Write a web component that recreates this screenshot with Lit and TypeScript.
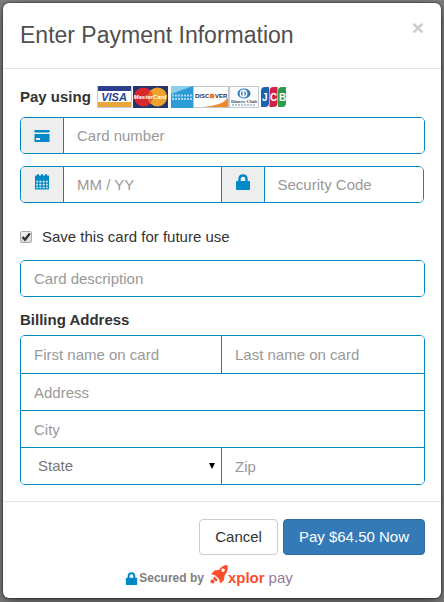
import { LitElement, html, css, svg } from "lit";
import { customElement, state } from "lit/decorators.js";

const lock = svg`<path d="M2 7h12q1 0 1 1v7q0 1-1 1H2q-1 0-1-1V8q0-1 1-1z"/><path d="M4.500 8V5q0-3.500 3.500-3.500T11.500 5v3" fill="none" stroke="currentColor" stroke-width="2.400"/>`;

@customElement("card-brands")
class CardBrands extends LitElement {
  static styles = css`
    :host { display: block; }
    svg { display: block; }
    text { font-family: "Liberation Sans", Arial, sans-serif; font-weight: bold; }
    .serif { font-family: "Liberation Serif", "Times New Roman", serif; }
  `;

  render() {
    return html`
      <svg width="190" height="22" viewBox="0 0 190 22" role="img" aria-label="Accepted cards">
        <rect x=".5" y=".5" width="34" height="21" fill="#fff" stroke="#c8ccd8"/>
        <rect x="1" y="0" width="33" height="5" fill="#2b3f8f"/>
        <rect x="1" y="16" width="33" height="5" fill="#eba63a"/>
        <text x="17" y="15" text-anchor="middle" font-size="11" font-style="italic" fill="#2b3f8f">VISA</text>

        <rect x="36" y="0" width="35" height="22" fill="#23366f"/>
        <circle cx="46.500" cy="11" r="9.500" fill="#d8282c"/>
        <circle cx="60.500" cy="11" r="9.500" fill="#f0a32c"/>
        <path d="M53.500 4.600a9.500 9.500 0 0 1 0 12.800a9.500 9.500 0 0 1 0-12.800z" fill="#e2662c"/>
        <text x="53" y="13" text-anchor="middle" font-size="6" font-style="italic" fill="#fff">MasterCard</text>

        <rect x="74" y="0" width="22" height="22" fill="#2f9bd6"/>
        <path d="M74 0h22L74 8z" fill="#a6daf2" opacity=".8"/>
        <path d="M75 9.500h20M75 13h20" stroke="#a9daf1" stroke-width="2" stroke-dasharray="2 1"/>

        <rect x="96.500" y=".5" width="35" height="21" fill="#fff" stroke="#c4c4c4"/>
        <path d="M131 12v9h-25q18-1 25-9z" fill="#f18a2b"/>
        <text x="98" y="12" font-size="6" fill="#3a3032">DISC</text>
        <circle cx="115" cy="10" r="2.500" fill="#f07f26"/>
        <text x="118" y="12" font-size="6" fill="#3a3032">VER</text>

        <rect x="132.500" y=".5" width="29" height="21" fill="#fafcfe" stroke="#c3cbd1"/>
        <ellipse cx="147" cy="7.500" rx="6.500" ry="5" fill="#2e7ab8"/>
        <circle cx="146.500" cy="7.500" r="3.900" fill="#fff"/>
        <path d="M145.500 4.500q-3 3 0 6zM147.500 4.500q3 3 0 6z" fill="#2e7ab8"/>
        <text class="serif" x="147" y="17" text-anchor="middle" font-size="5" fill="#3c4a5a">Diners Club</text>
        <path d="M135 19h24" stroke="#7d8894" stroke-dasharray="2 1"/>

        <path d="M164 21V5q0-4 4-4h4v16q0 4-4 4z" fill="#1c62ac"/>
        <path d="M172.500 21V5q0-4 4-4h4v16q0 4-4 4z" fill="#d3204a"/>
        <path d="M181 21V5q0-4 4-4h4v16q0 4-4 4z" fill="#2c9a48"/>
        <text x="165" y="15" font-size="10" fill="#fff">J</text>
        <text x="173" y="15" font-size="10" fill="#fff">C</text>
        <text x="182" y="15" font-size="10" fill="#fff">B</text>
      </svg>
    `;
  }
}

@customElement("app-root")
class AppRoot extends LitElement {
  @state() private saveCard = true;

  static styles = css`
    :host {
      display: block;
      box-sizing: border-box;
      min-height: 100vh;
      padding: 3px;
      background: #808080;
      font-family: "Liberation Sans", Arial, sans-serif;
      font-size: 15px;
      line-height: 20px;
      color: #333;
      --line: #0089c6;
    }
    * { box-sizing: border-box; }
    input, select, button { font: inherit; color: inherit; margin: 0; }
    .modal {
      background: #fff;
      border-radius: 6px;
      box-shadow: 0 0 1px 1px rgba(0, 0, 0, 0.3), 0 5px 15px rgba(0, 0, 0, 0.5);
    }
    .head {
      display: flex;
      justify-content: space-between;
      align-items: flex-start;
      padding: 16px 17px;
      border-bottom: 1px solid #e2e4e6;
    }
    h1 { margin: 0; font-size: 23px; line-height: 33px; font-weight: normal; color: #505050; }
    .close {
      border: 0;
      padding: 0;
      background: none;
      color: #ccc;
      font-size: 21px;
      line-height: 18px;
      font-weight: bold;
    }
    .body { display: flex; flex-direction: column; padding: 17px 16px 16px 17px; }
    .pay-using { display: flex; align-items: center; gap: 6px; height: 22px; margin-bottom: 9px; }
    h2 { margin: 0; font-size: 15px; line-height: 20px; font-weight: bold; }
    .frame {
      display: flex;
      height: 37px;
      border: 1px solid var(--line);
      border-radius: 5px;
      overflow: hidden;
    }
    .card-row { margin-bottom: 12px; }
    .split { margin-right: 1px; }
    .half { display: flex; flex: 1 1 0; min-width: 0; }
    .half + .half { flex-basis: 3px; border-left: 1px solid var(--line); }
    .addon {
      display: flex;
      flex: none;
      align-items: center;
      justify-content: center;
      width: 43px;
      border-right: 1px solid var(--line);
      background: #eee;
      color: var(--line);
    }
    .raised { padding-bottom: 5px; }
    .icon { display: block; width: 16px; height: 16px; fill: currentColor; }
    .field {
      flex: 1 1 0;
      width: 100%;
      min-width: 0;
      height: 100%;
      border: 0;
      padding: 0 13px;
      background: #fff;
      outline: none;
    }
    .field::placeholder { color: #999; opacity: 1; }
    .save { display: flex; align-items: center; gap: 10px; margin: 24px 0 13px; }
    .tick { position: relative; display: block; width: 12px; height: 12px; }
    .tick input {
      display: block;
      appearance: none;
      width: 12px;
      height: 12px;
      border: 1px solid #aaa;
      border-radius: 2px;
      background: linear-gradient(#f0f0f0, #dcdcdc);
    }
    .tick svg { position: absolute; inset: 0; pointer-events: none; }
    .billing { margin: 13px 0 5px; }
    .address {
      border: 1px solid var(--line);
      border-radius: 5px;
      overflow: hidden;
    }
    .line { display: flex; height: 37px; }
    .line + .line { border-top: 1px solid var(--line); }
    .state { position: relative; }
    .state select { appearance: none; padding: 0 17px; color: #777; }
    .arrow { position: absolute; right: 5px; top: 15px; pointer-events: none; }
    .foot { padding: 17px 16px 10px; border-top: 1px solid #e5e5e5; }
    .actions { display: flex; justify-content: flex-end; gap: 5px; }
    .btn {
      height: 36px;
      padding: 0 15px;
      border: 1px solid #ccc;
      border-radius: 4px;
      background: #fff;
    }
    .primary { border-color: #2e6da4; background: #337ab7; color: #fff; }
    .secured {
      display: flex;
      align-items: center;
      justify-content: center;
      height: 24px;
      margin-top: 9px;
      padding: 4px 26px 0 0;
      font-size: 12px;
      font-weight: bold;
      color: #808080;
    }
    .secured .lock { width: 13px; height: 13px; margin-right: 1px; fill: var(--line); color: var(--line); }
    .brand { display: flex; align-items: center; margin-left: 6px; font-size: 15px; color: #fb4f2b; }
    .rocket { width: 18px; height: 26px; }
    .pay { margin-left: 4px; font-weight: normal; color: #927a98; }
  `;

  render() {
    return html`
      <form class="modal" @submit=${(e: Event) => e.preventDefault()}>
        <header class="head">
          <h1>Enter Payment Information</h1>
          <button class="close" type="button" aria-label="Close">×</button>
        </header>

        <div class="body">
          <div class="pay-using">
            <h2>Pay using</h2>
            <card-brands></card-brands>
          </div>

          <div class="frame card-row">
            <span class="addon">
              <svg class="icon" viewBox="0 0 16 16"><path fill-rule="evenodd" d="M.5 2h15v2.500H.5zM.5 6h15v8H.5zM2 10v2h4v-2z"/></svg>
            </span>
            <input class="field" aria-label="Card number" placeholder="Card number" />
          </div>

          <div class="frame split">
            <div class="half">
              <span class="addon raised">
                <svg class="icon" viewBox="0 0 16 16"><path d="M1 2q0-.5.5-.5H3V1q0-1 1-1t1 1v.5h2V1q0-1 1-1t1 1v.5h2V1q0-1 1-1t1 1v.5h1.500q.5 0 .5.5v3H1z"/><path fill-rule="evenodd" d="M1 5h14V15q0 .5-.5.500h-13Q1 15.500 1 15zM2.300 6.800v1.600h1.700v-1.600zM5.300 6.800v1.600h2v-1.600zM8.700 6.800v1.600h2v-1.600zM12 6.800v1.600h1.700v-1.600zM2.300 9.800v1.600h1.700v-1.600zM5.300 9.800v1.600h2v-1.600zM8.700 9.800v1.600h2v-1.600zM12 9.800v1.600h1.700v-1.600zM2.300 12.700v1.600h1.700v-1.600zM5.300 12.700v1.600h2v-1.600zM8.700 12.700v1.600h2v-1.600zM12 12.700v1.600h1.700v-1.600z"/></svg>
              </span>
              <input class="field" aria-label="Expiry date" placeholder="MM / YY" />
            </div>
            <div class="half">
              <span class="addon raised"><svg class="icon" viewBox="0 0 16 16">${lock}</svg></span>
              <input class="field" aria-label="Security code" placeholder="Security Code" />
            </div>
          </div>

          <label class="save">
            <span class="tick">
              <input
                type="checkbox"
                .checked=${this.saveCard}
                @change=${(e: Event) => (this.saveCard = (e.target as HTMLInputElement).checked)}
              />
              ${this.saveCard
                ? html`<svg viewBox="0 0 12 12"><path d="M2.500 6L5 8.700L9.800 2.500" fill="none" stroke="#333" stroke-width="2.400"/></svg>`
                : null}
            </span>
            Save this card for future use
          </label>

          <div class="frame">
            <input class="field" aria-label="Card description" placeholder="Card description" />
          </div>

          <h2 class="billing">Billing Address</h2>
          <div class="address">
            <div class="line">
              <div class="half"><input class="field" aria-label="First name on card" placeholder="First name on card" /></div>
              <div class="half"><input class="field" aria-label="Last name on card" placeholder="Last name on card" /></div>
            </div>
            <div class="line"><input class="field" aria-label="Address" placeholder="Address" /></div>
            <div class="line"><input class="field" aria-label="City" placeholder="City" /></div>
            <div class="line">
              <div class="half state">
                <select class="field" aria-label="State"><option>State</option></select>
                <svg class="arrow" width="8" height="7" viewBox="0 0 8 7"><path d="M1 0h6L4 6z"/></svg>
              </div>
              <div class="half"><input class="field" aria-label="Zip" placeholder="Zip" /></div>
            </div>
          </div>
        </div>

        <footer class="foot">
          <div class="actions">
            <button class="btn" type="button">Cancel</button>
            <button class="btn primary" type="submit">Pay $64.50 Now</button>
          </div>
          <div class="secured">
            <svg class="lock" viewBox="0 0 16 16">${lock}</svg>
            Secured by
            <span class="brand">
              <svg class="rocket" viewBox="0 2 18 26">
                <path fill="#fb4f2b" fill-rule="evenodd" d="M17.500 2Q18.500 8.500 14.500 12.500L14 17l-3.500 3.500-1.500-4.500L5.500 12.500 1 11 5 7.200l4-.2Q12 2 17.500 2zM13 5.400a1.700 1.700 0 1 0 .1 0z"/>
                <path fill="#fb4f2b" d="M4.500 13.500L8 17l-2 1.500L3 15.500zM2.500 16.500a2 2 0 1 1-.1 0z"/>
              </svg>
              <span>xplor</span>
              <span class="pay">pay</span>
            </span>
          </div>
        </footer>
      </form>
    `;
  }
}
